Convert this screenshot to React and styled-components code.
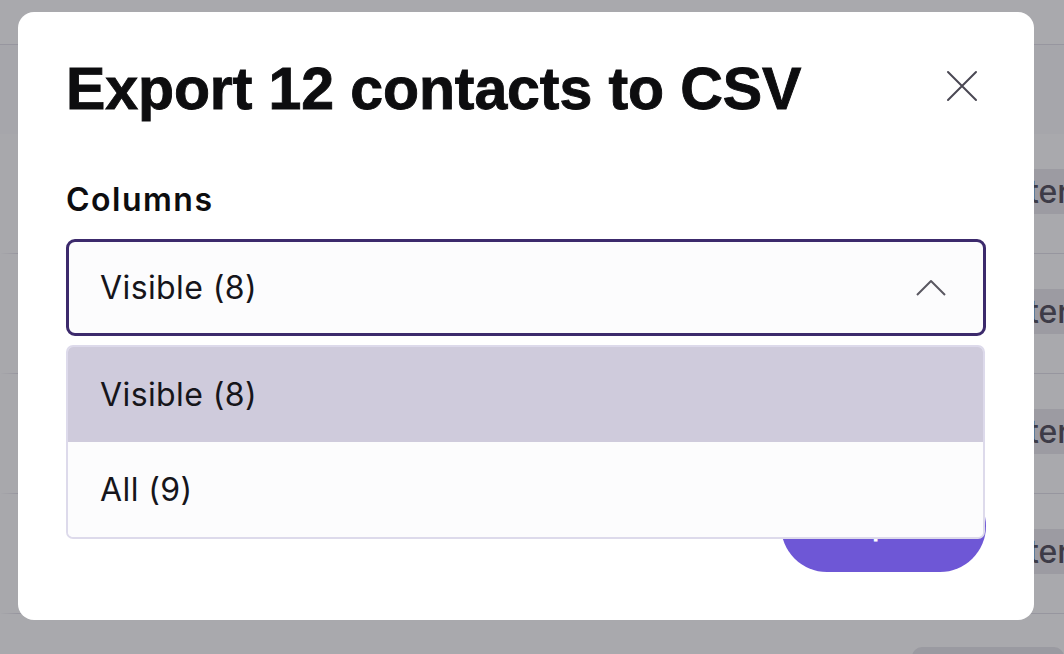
import React from "react";
import styled, { createGlobalStyle } from "styled-components";

const COLORS = {
  ink: "#0d0d0f",
  text: "#16151a",
  muted: "#4a4853",
  purpleDark: "#3c2a6c",
  purple: "#6e57d6",
  lavender: "#cfcbdc",
  lavenderLine: "#dddaeb",
  field: "#fcfcfd",
};

const GlobalStyle = createGlobalStyle`
  html, body {
    margin: 0;
    padding: 0;
    background: #ffffff;
  }
  body {
    font-family: Inter, "Noto Sans", sans-serif;
    color: ${COLORS.text};
  }
  * {
    box-sizing: border-box;
  }
`;

const ROWS = [1, 2, 3, 4];

function App() {
  const [value, setValue] = React.useState("visible");
  const [open, setOpen] = React.useState(true);

  const options = [
    { id: "visible", label: "Visible (8)" },
    { id: "all", label: "All (9)" },
  ];
  const current = options.find((o) => o.id === value);

  return (
    <>
      <GlobalStyle />
      <Page>
        <TableHead />
        <Toolbar />
        {ROWS.map((row) => (
          <Row key={row}>
            <span />
            <StatusChip>Interested</StatusChip>
          </Row>
        ))}
        <Footer>
          <PagerBox />
        </Footer>
      </Page>

      <Backdrop>
        <Modal>
          <Header>
            <Title>Export 12 contacts to CSV</Title>
            <CloseButton aria-label="Close">
              <svg width="32" height="32" viewBox="0 0 32 32" fill="none">
                <path
                  d="M2 2 L30 30 M30 2 L2 30"
                  stroke={COLORS.muted}
                  strokeWidth="2"
                  strokeLinecap="round"
                />
              </svg>
            </CloseButton>
          </Header>

          <Field>
            <Label>Columns</Label>
            <SelectWrap>
              <SelectButton onClick={() => setOpen(!open)}>
                {current.label}
                <svg width="30" height="18" viewBox="0 0 30 18" fill="none">
                  <path
                    d="M1 16 L15 2 L29 16"
                    stroke="#5a5862"
                    strokeWidth="2"
                    strokeLinejoin="round"
                  />
                </svg>
              </SelectButton>
              {open && (
                <Menu>
                  {options.map((o) => (
                    <Option
                      key={o.id}
                      $active={o.id === value}
                      onClick={() => {
                        setValue(o.id);
                        setOpen(false);
                      }}
                    >
                      {o.label}
                    </Option>
                  ))}
                </Menu>
              )}
            </SelectWrap>
          </Field>

          <Actions>
            <ExportButton>Export</ExportButton>
          </Actions>
        </Modal>
      </Backdrop>
    </>
  );
}

/* page behind the dialog */
const Page = styled.div`
  width: 100vw;
  height: 100vh;
  overflow: hidden;
  background: #ffffff;
  display: flex;
  flex-direction: column;
`;

const TableHead = styled.div`
  height: 45px;
  flex-shrink: 0;
  border-bottom: 1px solid #e3e1e9;
`;

const Toolbar = styled.div`
  height: 89px;
  flex-shrink: 0;
  background: #fbfbfc;
`;

const Row = styled.div`
  height: 120px;
  flex-shrink: 0;
  display: grid;
  grid-template-columns: 970px 1fr;
  align-items: center;
  border-bottom: 1px solid #e3e1e9;
  border-left: 18px solid #fdfdfd;
`;

const StatusChip = styled.span`
  height: 45px;
  margin-top: -4px;
  display: flex;
  align-items: center;
  padding: 0 12px;
  background: #ebeaee;
  color: #55525f;
  font-size: 32px;
  font-weight: 500;
  white-space: nowrap;
`;

const Footer = styled.div`
  display: flex;
  justify-content: flex-end;
  padding-top: 33px;
`;

const PagerBox = styled.div`
  width: 152px;
  height: 40px;
  border-radius: 10px;
  background: #e8e7ec;
`;

/* dialog */
const Backdrop = styled.div`
  position: fixed;
  inset: 0;
  background: rgba(20, 18, 30, 0.366);
  display: flex;
  justify-content: flex-start;
  align-items: flex-start;
  padding: 12px 0 0 18px;
`;

const Modal = styled.div`
  width: 1016px;
  height: 608px;
  background: #ffffff;
  border-radius: 16px;
  padding: 43px 48px 48px;
  display: flex;
  flex-direction: column;
`;

const Header = styled.div`
  display: flex;
  justify-content: space-between;
  align-items: center;
`;

const Title = styled.h2`
  margin: 0;
  font-family: "Liberation Sans", Arial, sans-serif;
  font-weight: 700;
  font-size: 59px;
  line-height: 68px;
  letter-spacing: -0.1px;
  -webkit-text-stroke: 0.9px ${COLORS.ink};
  color: ${COLORS.ink};
`;

const CloseButton = styled.button`
  width: 48px;
  height: 48px;
  margin-top: -6px;
  padding: 0;
  border: none;
  background: transparent;
  display: flex;
  align-items: center;
  justify-content: center;
  cursor: pointer;
`;

const Field = styled.div`
  margin-top: 58px;
  display: flex;
  flex-direction: column;
  gap: 20px;
`;

const Label = styled.label`
  font-size: 32px;
  line-height: 38px;
  font-weight: 600;
  letter-spacing: 1.5px;
  color: ${COLORS.ink};
`;

const SelectWrap = styled.div`
  position: relative;
`;

const SelectButton = styled.button`
  width: 100%;
  height: 97px;
  display: flex;
  align-items: center;
  justify-content: space-between;
  padding: 0 37px 0 31px;
  border: 3px solid ${COLORS.purpleDark};
  border-radius: 9px;
  background: ${COLORS.field};
  font-family: inherit;
  font-size: 32px;
  font-weight: 400;
  letter-spacing: 0.4px;
  color: ${COLORS.text};
  cursor: pointer;
`;

const Menu = styled.div`
  position: absolute;
  top: calc(100% + 9px);
  left: 0;
  right: 1px;
  border: 2px solid ${COLORS.lavenderLine};
  border-radius: 7px;
  background: ${COLORS.field};
  overflow: hidden;
  z-index: 2;
`;

const Option = styled.div`
  height: 95px;
  display: flex;
  align-items: center;
  padding-left: 32px;
  font-size: 32px;
  letter-spacing: 0.4px;
  color: ${COLORS.text};
  background: ${(p) => (p.$active ? COLORS.lavender : COLORS.field)};
  cursor: pointer;
`;

const Actions = styled.div`
  margin-top: auto;
  display: flex;
  justify-content: flex-end;
`;

const ExportButton = styled.button`
  width: 205px;
  height: 92px;
  border: none;
  border-radius: 46px;
  background: ${COLORS.purple};
  color: #ffffff;
  font-family: inherit;
  font-size: 28px;
  font-weight: 600;
  cursor: pointer;
`;

export default App;
